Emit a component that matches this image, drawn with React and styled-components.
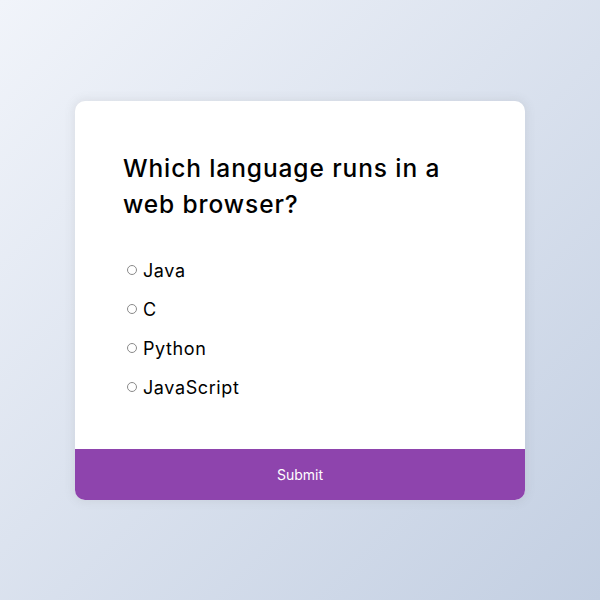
import React, { useState } from 'react';
import styled, { createGlobalStyle } from 'styled-components';

const GlobalStyle = createGlobalStyle`
    * { box-sizing: border-box; }
    body {
        margin: 0;
        font-family: Inter, "Noto Sans", sans-serif;
        background: linear-gradient(135deg, #f1f4fa 0%, #c3cfe2 100%);
        min-height: 100vh;
    }
`;

const questions = ['Java', 'C', 'Python', 'JavaScript'];

const App = () => {
    const [picked, setPicked] = useState(null);

    return (
        <>
            <GlobalStyle />
            <Page>
                <Card>
                    <Header>
                        <Title>Which language runs in a web browser?</Title>
                        <List>
                            {questions.map(q => (
                                <Item key={q}>
                                    <Radio
                                        type="radio"
                                        name="answer"
                                        checked={picked === q}
                                        onChange={() => setPicked(q)}
                                    />
                                    <Label>{q}</Label>
                                </Item>
                            ))}
                        </List>
                    </Header>
                    <Submit>Submit</Submit>
                </Card>
            </Page>
        </>
    );
};

export default App;

const Page = styled.div`
    min-height: 600px;
    display: flex;
    align-items: center;
    justify-content: center;
`;
const Card = styled.div`
    width: 450px;
    background: #fff;
    border-radius: 10px;
    box-shadow: 0 0 10px 2px rgba(100, 100, 100, 0.1);
    overflow: hidden;
`;
const Header = styled.div`
    padding: 49px 48px 50px;
`;
const Title = styled.h2`
    margin: 0 0 37px;
    font-size: 24.5px;
    font-weight: 500;
    line-height: 36px;
    letter-spacing: 0.9px;
    color: #000;
`;
const List = styled.ul`
    list-style: none;
    margin: 0;
    padding: 0 0 0 4px;
    display: flex;
    flex-direction: column;
    gap: 16px;
`;
const Item = styled.li`
    display: flex;
    align-items: center;
    height: 23px;
`;
const Radio = styled.input`
    appearance: none;
    width: 10px;
    height: 10px;
    margin: 0 6px 0 0;
    border: 1px solid #8a8a8a;
    border-radius: 50%;
    background: #fff;
    &:checked {
        background: #8e44ad;
        border-color: #8e44ad;
    }
`;
const Label = styled.span`
    font-size: 18px;
    letter-spacing: 0.6px;
    color: #000;
`;
const Submit = styled.button`
    display: block;
    width: 100%;
    height: 51px;
    border: none;
    background: #8e44ad;
    color: #fff;
    font-family: Inter, "Noto Sans", sans-serif;
    font-size: 14px;
    cursor: pointer;
`;
